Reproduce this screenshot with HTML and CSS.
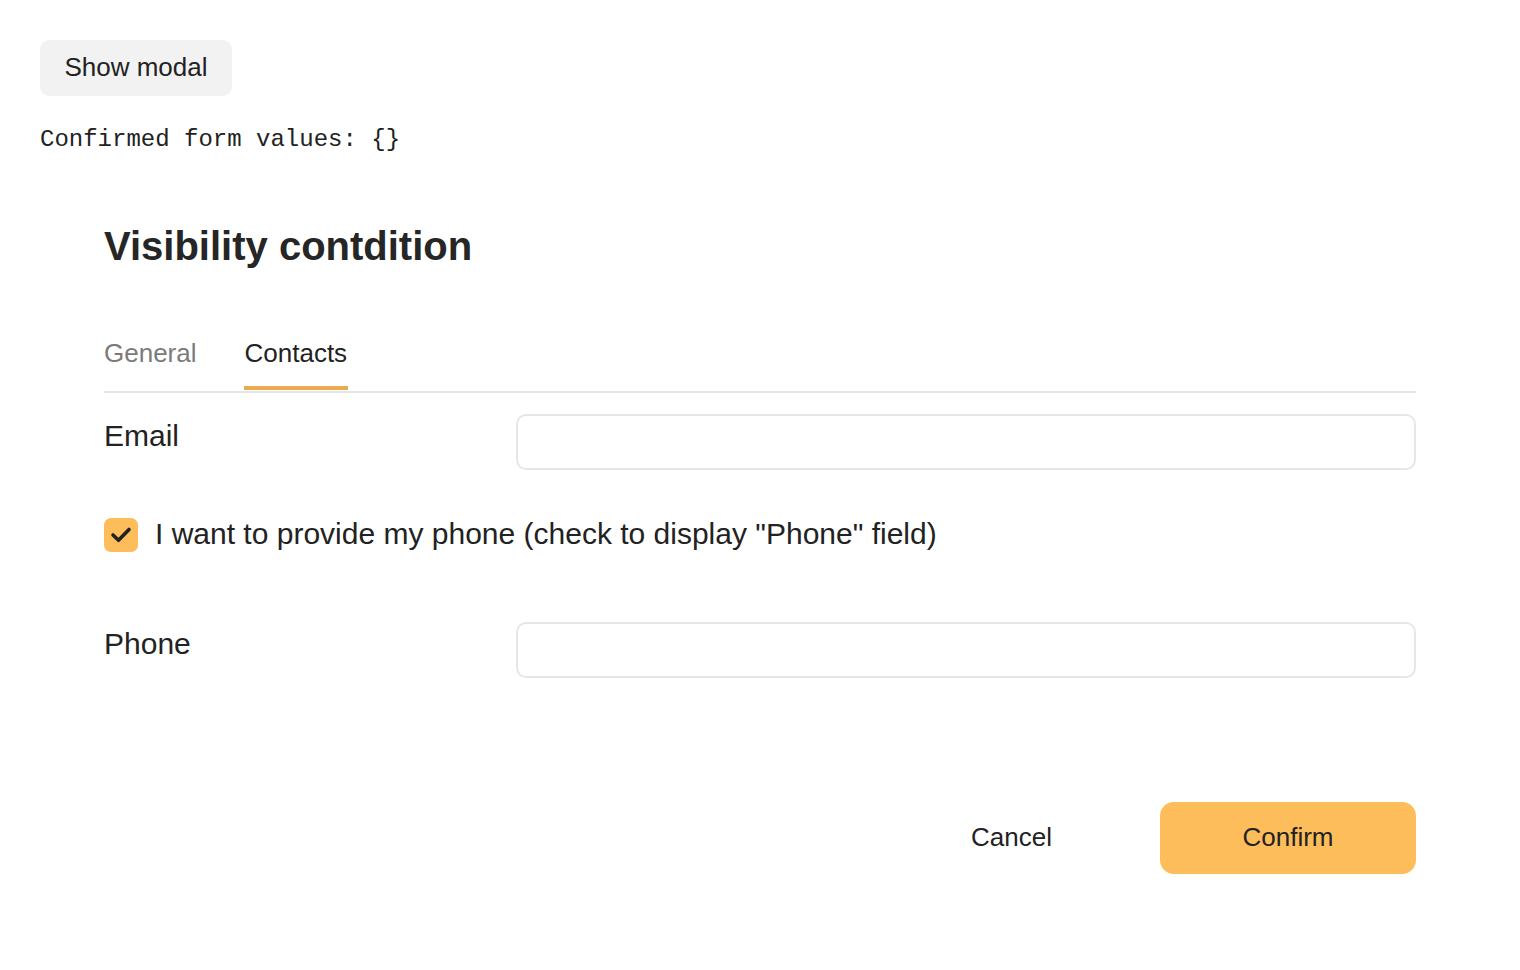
FILE: index.html
```html
<!DOCTYPE html>
<html lang="en">
<head>
<meta charset="utf-8">
<title>Visibility condition</title>
<link rel="stylesheet" href="styles.css">
</head>
<body>
<button class="show-btn" type="button">Show modal</button>
<pre class="result">Confirmed form values: {}</pre>
<section class="modal">
  <h2 class="modal-title">Visibility contdition</h2>
  <div class="tabs">
    <div class="tab">General</div>
    <div class="tab tab-active">Contacts</div>
  </div>
  <div class="field-row">
    <label class="field-label">Email</label>
    <input class="field-input" type="text">
  </div>
  <div class="check-row">
    <span class="checkbox">
      <svg width="34" height="34" viewBox="0 0 34 34"><polyline points="9,17 14.5,22.3 25,11.5" fill="none" stroke="#222" stroke-width="3.6" stroke-linecap="round" stroke-linejoin="round"/></svg>
    </span>
    <span class="check-text">I want to provide my phone (check to display "Phone" field)</span>
  </div>
  <div class="field-row phone-row">
    <label class="field-label">Phone</label>
    <input class="field-input" type="text">
  </div>
  <div class="actions">
    <button class="btn-cancel" type="button">Cancel</button>
    <button class="btn-confirm" type="button">Confirm</button>
  </div>
</section>
</body>
</html>
```
FILE: styles.css
```css
html, body {
  margin: 0;
  background: #fff;
}
body {
  padding: 40px;
  font-family: "Liberation Sans", Arial, sans-serif;
  color: #222;
}
.show-btn {
  display: block;
  box-sizing: border-box;
  width: 192px;
  height: 56px;
  padding: 0 0 2px;
  border: none;
  border-radius: 9px;
  background: #f2f2f2;
  font-family: "Liberation Sans", Arial, sans-serif;
  font-size: 26px;
  color: #222;
}
.result {
  margin: 30px 0 0;
  font-family: "Liberation Mono", "Courier New", monospace;
  font-size: 24px;
  line-height: 27px;
  color: #222;
}
.modal {
  padding: 0 64px;
}
.modal-title {
  margin: 70px 0 0;
  font-size: 40px;
  line-height: 46px;
  font-weight: bold;
  color: #262626;
}
.tabs {
  display: flex;
  gap: 47px;
  margin-top: 69px;
  padding-bottom: 1px;
  border-bottom: 2px solid #e6e6e6;
}
.tab {
  font-size: 26px;
  line-height: 30px;
  padding: 0 0 18px;
  border-bottom: 4px solid transparent;
  color: #7b7b7b;
}
.tab-active {
  color: #222;
  padding-left: 1px;
  padding-right: 1px;
  border-bottom-color: #e9aa50;
}
.field-row {
  display: grid;
  grid-template-columns: 412px 1fr;
  margin-top: 21px;
}
.field-label {
  font-size: 30px;
  line-height: 34px;
  padding-top: 5px;
}
.field-input {
  box-sizing: border-box;
  height: 56px;
  border: 2px solid #e6e6e6;
  border-radius: 10px;
  background: #fff;
  margin: 0;
  outline: none;
}
.check-row {
  display: flex;
  align-items: flex-start;
  gap: 17px;
  margin-top: 48px;
}
.checkbox {
  display: flex;
  flex: none;
  width: 34px;
  height: 34px;
  border-radius: 7px;
  background: #fdbd5a;
}
.check-text {
  font-size: 30px;
  line-height: 34px;
  margin-top: -1px;
}
.phone-row {
  margin-top: 70px;
}
.actions {
  display: flex;
  justify-content: flex-end;
  gap: 68px;
  margin-top: 124px;
}
.btn-cancel,
.btn-confirm {
  height: 72px;
  padding-bottom: 2px;
  border: none;
  border-radius: 14px;
  font-family: "Liberation Sans", Arial, sans-serif;
  font-size: 26px;
  color: #222;
}
.btn-cancel {
  background: transparent;
  padding-left: 40px;
  padding-right: 40px;
}
.btn-confirm {
  width: 256px;
  background: #fdbd5a;
}
```
